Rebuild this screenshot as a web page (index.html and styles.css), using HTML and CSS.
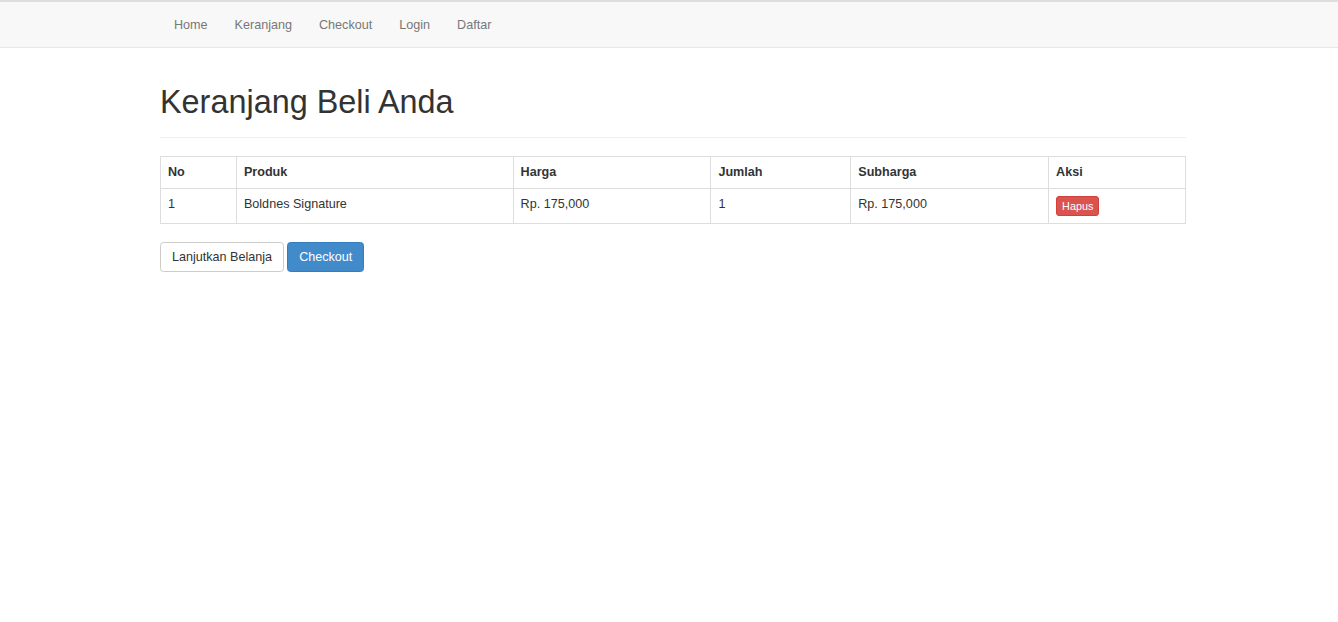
FILE: index.html
```html
<!DOCTYPE html>
<html>
<head>
<meta charset="utf-8">
<title>Keranjang</title>
<link rel="stylesheet" href="styles.css">
</head>
<body>
<nav class="navbar">
  <div class="container nav-inner">
    <a class="nav-link" href="#">Home</a>
    <a class="nav-link" href="#">Keranjang</a>
    <a class="nav-link" href="#">Checkout</a>
    <a class="nav-link" href="#">Login</a>
    <a class="nav-link" href="#">Daftar</a>
  </div>
</nav>
<main class="container">
  <div class="page-header">
    <h1 class="title">Keranjang Beli Anda</h1>
  </div>
  <table class="cart">
    <thead>
      <tr>
        <th class="c-no">No</th>
        <th class="c-prod">Produk</th>
        <th class="c-harga">Harga</th>
        <th class="c-jml">Jumlah</th>
        <th class="c-sub">Subharga</th>
        <th class="c-aksi">Aksi</th>
      </tr>
    </thead>
    <tbody>
      <tr>
        <td>1</td>
        <td>Boldnes Signature</td>
        <td>Rp. 175,000</td>
        <td>1</td>
        <td>Rp. 175,000</td>
        <td><a class="btn-del" href="#">Hapus</a></td>
      </tr>
    </tbody>
  </table>
  <div class="actions">
    <a class="btn btn-default" href="#">Lanjutkan Belanja</a>
    <a class="btn btn-primary" href="#">Checkout</a>
  </div>
</main>
</body>
</html>
```
FILE: styles.css
```css
* { box-sizing: border-box; }
html, body { margin: 0; padding: 0; background: #fff; }
body {
  font-family: "Liberation Sans", Arial, Helvetica, sans-serif;
  font-size: 12.6px;
  line-height: 18px;
  color: #333;
}
a { text-decoration: none; }
.container { width: 1026px; margin-left: 160px; }

.navbar {
  background: #f8f8f8;
  border-top: 2px solid #dedede;
  border-bottom: 1px solid #e7e7e7;
  height: 48px;
}
.nav-inner { display: flex; height: 45px; margin-left: 160px; }
.nav-link {
  color: #777;
  padding: 13.5px 13.5px;
  line-height: 18px;
  height: 45px;
  display: block;
}
.nav-link:first-child { padding-left: 14px; }

.page-header {
  margin-top: 36px;
  padding-bottom: 8px;
  border-bottom: 1px solid #eee;
  margin-bottom: 18px;
}
.title {
  margin: 0 0 9px 0;
  font-size: 32.4px;
  line-height: 36px;
  font-weight: 500;
  color: #333;
}

.cart {
  width: 1026px;
  border-collapse: collapse;
  border: 1px solid #ddd;
  margin-bottom: 18px;
}
.cart th, .cart td {
  border: 1px solid #ddd;
  padding: 6px 7px 7px;
  text-align: left;
  vertical-align: top;
  line-height: 18px;
}
.cart th { font-weight: bold; }
.c-no { width: 76px; }
.c-prod { width: 277px; }
.c-harga { width: 198px; }
.c-jml { width: 140px; }
.c-sub { width: 198px; }
.c-aksi { width: 137px; }

.cart td:last-child { padding-top: 7px; }

.btn-del {
  display: inline-block;
  vertical-align: top;
  background: #d9534f;
  border: 1px solid #d43f3a;
  color: #fff;
  font-size: 10.8px;
  line-height: 16px;
  padding: 1px 5px;
  border-radius: 3px;
}

.actions { display: flex; gap: 3px; }
.btn {
  display: inline-block;
  font-size: 12.6px;
  line-height: 18px;
  padding: 4.5px 11px 5.5px;
  border: 1px solid transparent;
  border-radius: 3.5px;
  height: 30px;
}
.btn-default { background: #fff; border-color: #ccc; color: #333; }
.btn-primary { background: #428bca; border-color: #357ebd; color: #fff; }
```
